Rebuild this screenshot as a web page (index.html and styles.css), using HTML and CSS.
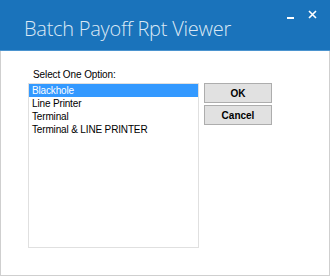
FILE: index.html
```html
<!DOCTYPE html>
<html lang="en">
<head>
    <meta charset="UTF-8">
    <title>Batch Payoff Rpt Viewer</title>
    <link rel="stylesheet" href="styles.css">
</head>
<body>
    <div class="window">
        <div class="titlebar">
            <h1 class="title">Batch Payoff Rpt Viewer</h1>
            <div class="controls">
                <span class="min-btn"></span>
                <svg class="close-btn" width="9" height="9" viewBox="0 0 9 9">
                    <path d="M1 1L8 8M8 1L1 8" stroke="#fff" stroke-width="1.6" fill="none"/>
                </svg>
            </div>
        </div>
        <div class="content">
            <div class="pick">
                <label class="pick-label">Select One Option:</label>
                <ul class="listbox">
                    <li class="selected">Blackhole</li>
                    <li>Line Printer</li>
                    <li>Terminal</li>
                    <li>Terminal &amp; LINE PRINTER</li>
                </ul>
            </div>
            <div class="buttons">
                <button class="btn">OK</button>
                <button class="btn">Cancel</button>
            </div>
        </div>
    </div>
</body>
</html>
```

FILE: styles.css
```css
body {
    margin: 0;
    padding: 0;
    font-family: "Liberation Sans", Arial, sans-serif;
    background: #fff;
}

.window {
    width: 330px;
    height: 276px;
    box-sizing: border-box;
    border: 1px solid #cfcfcf;
    border-top: none;
    display: flex;
    flex-direction: column;
}

/* Title bar */
.titlebar {
    height: 50px;
    background-color: #1a73bb;
    border-bottom: 1px solid #4b94cf;
    margin: 0 -1px;
    display: flex;
    justify-content: space-between;
    align-items: flex-start;
}

.title {
    margin: 0;
    padding: 17px 0 0 24px;
    font-family: "Open Sans", sans-serif;
    font-weight: 300;
    font-size: 20px;
    line-height: 24px;
    color: #dbe8f5;
    letter-spacing: -0.25px;
}

.controls {
    display: flex;
    align-items: flex-start;
    gap: 14px;
    padding: 10px 13px 0 0;
}

.min-btn {
    display: block;
    width: 7px;
    height: 2px;
    background: #fff;
    margin-top: 7px;
}

/* Content */
.content {
    display: flex;
    gap: 5px;
    padding: 17px 0 0 27px;
}

.pick-label {
    display: block;
    font-size: 10px;
    line-height: 13px;
    letter-spacing: -0.1px;
    padding-left: 5px;
    color: #000;
}

.listbox {
    list-style: none;
    margin: 2px 0 0 0;
    padding: 0;
    width: 171px;
    height: 165px;
    box-sizing: border-box;
    border: 1px solid #e0e0e0;
}

.listbox li {
    font-size: 10px;
    line-height: 13px;
    letter-spacing: -0.15px;
    padding-left: 3px;
    color: #000;
}

.listbox li.selected {
    background-color: #3399ff;
    color: #fff;
}

.buttons {
    display: flex;
    flex-direction: column;
    gap: 2px;
    padding-top: 15px;
}

.btn {
    width: 68px;
    height: 20px;
    margin: 0;
    padding: 0;
    background: #e1e1e1;
    border: 1px solid #adadad;
    font-family: "Liberation Sans", Arial, sans-serif;
    font-weight: bold;
    font-size: 10px;
    color: #000;
}
```
